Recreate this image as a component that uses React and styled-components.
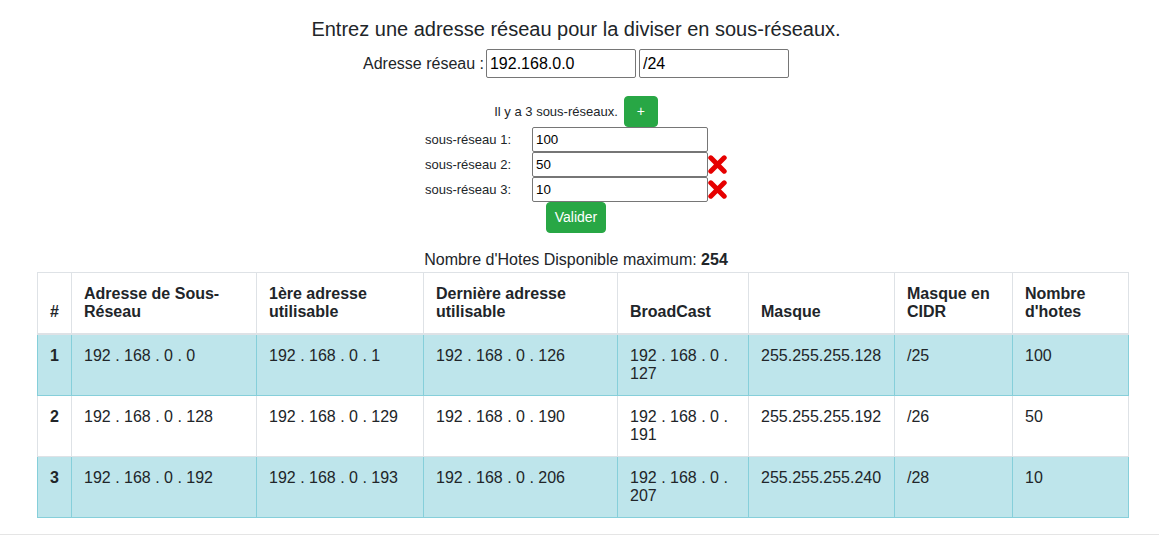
import React from "react";
import styled, { createGlobalStyle } from "styled-components";

const GlobalStyle = createGlobalStyle`
  html, body { margin: 0; padding: 0; background: #fff; }
  body {
    font-family: "Liberation Sans", Arial, sans-serif;
    color: #212529;
  }
`;

const Page = styled.div`
  width: 1159px;
`;

const Main = styled.main`
  width: 1152px;
  padding-top: 18px;
  display: flex;
  flex-direction: column;
  align-items: center;
`;

const Title = styled.h1`
  margin: 0;
  font-size: 20px;
  line-height: 23px;
  font-weight: normal;
`;

const AddressRow = styled.div`
  margin-top: 8px;
  height: 29px;
  display: flex;
  align-items: center;
`;

const Label = styled.label`
  font-size: 16px;
  line-height: 18px;
  margin-right: 2px;
`;

const AddressInput = styled.input`
  box-sizing: border-box;
  width: 150px;
  height: 29px;
  border: 1px solid #767676;
  border-radius: 2px;
  padding: 0 3px;
  font-family: "Liberation Sans", Arial, sans-serif;
  font-size: 16px;
  color: #000;
  & + & { margin-left: 3px; }
`;

const CountRow = styled.div`
  margin-top: 18px;
  display: flex;
  align-items: center;
  gap: 6px;
  font-size: 13px;
  line-height: 15px;
`;

const GreenButton = styled.button`
  box-sizing: border-box;
  width: ${(p) => p.$width}px;
  height: 31px;
  padding: 0;
  background: #28a745;
  border: 1px solid #28a745;
  border-radius: 4px;
  color: #fff;
  font-family: "Liberation Sans", Arial, sans-serif;
  font-size: 14px;
  line-height: 21px;
  cursor: pointer;
`;

const SubnetGrid = styled.div`
  display: grid;
  grid-template-columns: 107px 176px 19px;
  grid-auto-rows: 25px;
  align-items: center;
  font-size: 13px;
  line-height: 15px;
`;

const SubnetInput = styled.input`
  box-sizing: border-box;
  width: 176px;
  height: 25px;
  border: 1px solid #767676;
  border-radius: 2px;
  padding: 0 3px;
  font-family: "Liberation Sans", Arial, sans-serif;
  font-size: 13.33px;
  color: #000;
`;

const RemoveIcon = styled.svg`
  width: 19px;
  height: 19px;
  display: block;
`;

const HostsLine = styled.p`
  margin: 18px 0 0;
  font-size: 16px;
  line-height: 18px;
`;

const TableWrap = styled.div`
  padding: 3px 0 0 37px;
`;

const Table = styled.table`
  width: 1091px;
  table-layout: fixed;
  border-collapse: collapse;
  font-size: 16px;
  color: #212529;
`;

const HeadCell = styled.th`
  padding: 12px;
  border: 1px solid #dee2e6;
  border-bottom-width: 2px;
  vertical-align: bottom;
  text-align: left;
  font-weight: bold;
  line-height: 18px;
`;

const Row = styled.tr`
  background: ${(p) => (p.$info ? "#bee5eb" : "#fff")};
`;

const BodyCell = styled.td`
  padding: 12px;
  border: 1px solid ${(p) => (p.$info ? "#86cfda" : "#dee2e6")};
  vertical-align: top;
  text-align: left;
  line-height: 18px;
  font-weight: ${(p) => (p.$bold ? "bold" : "normal")};
`;

const Divider = styled.hr`
  margin: 16px 0 0;
  border: 0;
  border-top: 1px solid rgba(0, 0, 0, 0.1);
`;

const Cross = () => (
  <RemoveIcon viewBox="0 0 19 19">
    <path
      d="M2.8 2.8 L16.2 16.2 M16.2 2.8 L2.8 16.2"
      stroke="#e60000"
      strokeWidth="5"
      strokeLinecap="round"
    />
  </RemoveIcon>
);

const subnets = [
  { label: "sous-réseau 1:", value: "100", removable: false },
  { label: "sous-réseau 2:", value: "50", removable: true },
  { label: "sous-réseau 3:", value: "10", removable: true },
];

const colWidths = [34, 185, 167, 194, 131, 146, 118, 116];

const headers = [
  "#",
  "Adresse de Sous-Réseau",
  "1ère adresse utilisable",
  "Dernière adresse utilisable",
  "BroadCast",
  "Masque",
  "Masque en CIDR",
  "Nombre d'hotes",
];

const rows = [
  ["1", "192 . 168 . 0 . 0", "192 . 168 . 0 . 1", "192 . 168 . 0 . 126", "192 . 168 . 0 . 127", "255.255.255.128", "/25", "100"],
  ["2", "192 . 168 . 0 . 128", "192 . 168 . 0 . 129", "192 . 168 . 0 . 190", "192 . 168 . 0 . 191", "255.255.255.192", "/26", "50"],
  ["3", "192 . 168 . 0 . 192", "192 . 168 . 0 . 193", "192 . 168 . 0 . 206", "192 . 168 . 0 . 207", "255.255.255.240", "/28", "10"],
];

export default function App() {
  return (
    <Page>
      <GlobalStyle />
      <Main>
        <Title>Entrez une adresse réseau pour la diviser en sous-réseaux.</Title>
        <AddressRow>
          <Label>Adresse réseau :</Label>
          <AddressInput defaultValue="192.168.0.0" />
          <AddressInput defaultValue="/24" />
        </AddressRow>
        <CountRow>
          <span>Il y a 3 sous-réseaux.</span>
          <GreenButton $width={34}>+</GreenButton>
        </CountRow>
        <SubnetGrid>
          {subnets.map((s) => (
            <React.Fragment key={s.label}>
              <span>{s.label}</span>
              <SubnetInput defaultValue={s.value} />
              {s.removable ? <Cross /> : <span />}
            </React.Fragment>
          ))}
        </SubnetGrid>
        <GreenButton $width={60}>Valider</GreenButton>
        <HostsLine>
          Nombre d'Hotes Disponible maximum: <b>254</b>
        </HostsLine>
      </Main>
      <TableWrap>
        <Table>
          <colgroup>
            {colWidths.map((w, i) => (
              <col key={i} style={{ width: w }} />
            ))}
          </colgroup>
          <thead>
            <tr>
              {headers.map((h) => (
                <HeadCell key={h}>{h}</HeadCell>
              ))}
            </tr>
          </thead>
          <tbody>
            {rows.map((r, i) => {
              const info = i % 2 === 0;
              return (
                <Row key={r[0]} $info={info}>
                  {r.map((c, j) => (
                    <BodyCell key={j} $info={info} $bold={j === 0}>
                      {c}
                    </BodyCell>
                  ))}
                </Row>
              );
            })}
          </tbody>
        </Table>
      </TableWrap>
      <Divider />
    </Page>
  );
}
